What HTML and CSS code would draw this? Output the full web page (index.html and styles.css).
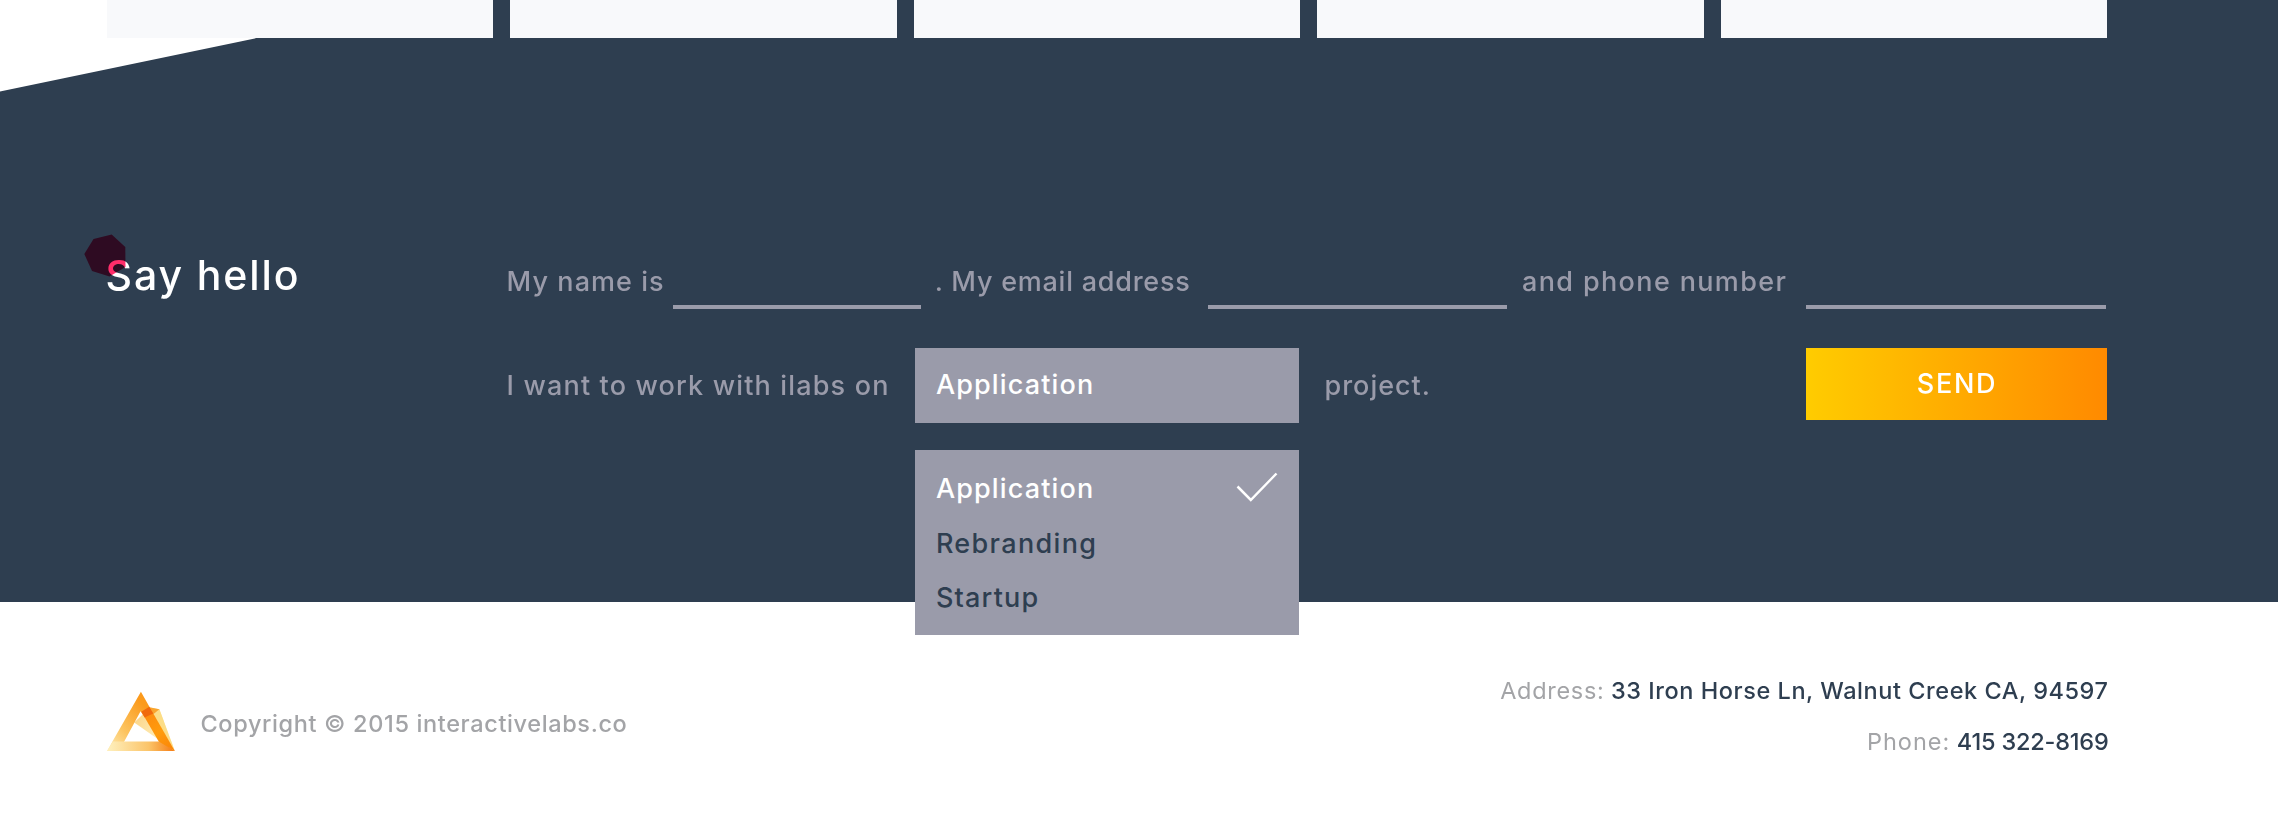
FILE: index.html
```html
<!DOCTYPE html>
<html lang="en">
<head>
<meta charset="utf-8">
<title>Interactive Labs</title>
<link rel="stylesheet" href="styles.css">
</head>
<body>
<section class="dark">
  <div class="wedge"></div>
  <div class="cards">
    <div class="card"></div>
    <div class="card"></div>
    <div class="card"></div>
    <div class="card"></div>
    <div class="card"></div>
  </div>
  <div class="contact">
    <h2 class="title">Say hello
      <svg class="heptagon" viewBox="0 0 42 43"><path d="M27.700 0.500L9.500 5L0.300 20L8 37L25.500 42.500L41.500 33L41.300 13Z" fill="#ff2d6a"/></svg>
    </h2>
    <form class="form">
      <div class="row row-fields">
        <span class="label l-name">My name is</span>
        <span class="field f-name"></span>
        <span class="label l-email">. My email address</span>
        <span class="field f-email"></span>
        <span class="label l-phone">and phone number</span>
        <span class="field f-phone"></span>
      </div>
      <div class="row row-project">
        <span class="label l-want">I want to work with ilabs on</span>
        <div class="select">
          <span class="value">Application</span>
          <ul class="menu">
            <li class="item active">Application
              <svg class="check" viewBox="0 0 42 30"><path d="M1.500 14.500L14.800 28L40.500 1.500" fill="none" stroke="#fff" stroke-width="2.500"/></svg>
            </li>
            <li class="item rebranding">Rebranding</li>
            <li class="item startup">Startup</li>
          </ul>
        </div>
        <span class="label l-project">project.</span>
        <button class="send" type="button">SEND</button>
      </div>
    </form>
  </div>
</section>
<footer class="footer">
  <svg class="logo" viewBox="22 18 204 181">
    <defs>
      <linearGradient id="ring" gradientUnits="userSpaceOnUse" x1="22" y1="197" x2="150" y2="80">
        <stop offset="0" stop-color="#fff0bd"/><stop offset=".45" stop-color="#fcc460"/><stop offset="1" stop-color="#fb9a1c"/>
      </linearGradient>
      <linearGradient id="base" gradientUnits="userSpaceOnUse" x1="30" y1="0" x2="224" y2="0">
        <stop offset="0" stop-color="#feeeba"/><stop offset=".6" stop-color="#fbc469"/><stop offset="1" stop-color="#f57a12"/>
      </linearGradient>
      <linearGradient id="leg" gradientUnits="userSpaceOnUse" x1="140" y1="80" x2="224" y2="197">
        <stop offset="0" stop-color="#fc8a10"/><stop offset=".5" stop-color="#ff9c0c"/><stop offset="1" stop-color="#f98208"/>
      </linearGradient>
      <linearGradient id="face" gradientUnits="userSpaceOnUse" x1="105" y1="100" x2="185" y2="150">
        <stop offset="0" stop-color="#fbd58a"/><stop offset="1" stop-color="#fff0bb"/>
      </linearGradient>
    </defs>
    <path d="M103 112L150 67L178 72L224 197Z" fill="url(#face)"/>
    <path d="M178 72L224 197L160 90Z" fill="#fcdd86"/>
    <path d="M123 20L22 197H58L122 78L134 96L158 82Z" fill="url(#ring)"/>
    <path d="M22 197L40 168H184L224 197Z" fill="url(#base)"/>
    <path d="M134 96L156 78L224 197L176 168Z" fill="url(#leg)"/>
    <path d="M148 66L178 72L160 87Z" fill="#f9a52d"/>
    <path d="M124 80L148 65L160 85L134 97Z" fill="#f0690c"/>
  </svg>
  <p class="copyright">Copyright © 2015 interactivelabs.co</p>
  <dl class="details">
    <div class="detail"><dt class="address-label">Address:</dt><dd class="address">33 Iron Horse Ln, Walnut Creek CA, 94597</dd></div>
    <div class="detail"><dt class="phone-label">Phone:</dt><dd class="phone">415 322-8169</dd></div>
  </dl>
</footer>
</body>
</html>
```
FILE: styles.css
```css
* { box-sizing: border-box; }
body {
  margin: 0;
  background: #fff;
  font-family: Inter, Lato, sans-serif;
  font-weight: 500;
}
.dark {
  position: relative;
  height: 601.5px;
  background: #2e3e50;
  padding: 0 171px 0 107px;
}
.wedge {
  position: absolute;
  left: 0;
  top: 0;
  width: 439px;
  height: 91.6px;
  background: #fff;
  clip-path: polygon(0 0, 100% 0, 0 100%);
}
.cards {
  position: relative;
  display: grid;
  grid-template-columns: repeat(5, 1fr);
  gap: 17.2px;
  height: 38.4px;
}
.card { background: #f8f9fb; }
.contact {
  display: flex;
  padding-top: 212.7px;
}
.title {
  position: relative;
  margin: 0 0 0 -1.5px;
  width: 399.1px;
  font-size: 41px;
  font-weight: 500;
  line-height: 48px;
  letter-spacing: 1.9px;
  color: #fff;
}
.heptagon {
  position: absolute;
  left: -21.5px;
  top: -17px;
  width: 42px;
  height: 43px;
  mix-blend-mode: multiply;
}
.form {
  flex: 1;
  margin: 10.9px 0 0 2px;
}
.row {
  display: flex;
  align-items: flex-start;
  font-size: 27px;
  line-height: 30px;
  color: #9a9baa;
  white-space: nowrap;
}
.row-fields { height: 47px; }
.row-project { margin-top: 39px; }
.label { flex: none; padding-top: 5px; }
.l-name { width: 166.3px; letter-spacing: 1.06px; }
.l-email { width: 287.2px; padding-left: 14px; letter-spacing: 0.76px; }
.l-phone { width: 298.9px; padding-left: 15px; letter-spacing: 1.36px; }
.l-want { width: 408.8px; padding-top: 23px; letter-spacing: 1.16px; }
.l-project { padding: 23px 0 0 26px; letter-spacing: 0.96px; }
.field {
  flex: none;
  height: 47px;
  border-bottom: 4px solid #9a9baa;
}
.f-name { width: 247.8px; }
.f-email { width: 299.2px; }
.f-phone { width: 299.7px; }
.select {
  position: relative;
  flex: none;
  width: 383.2px;
  height: 75px;
  padding: 22px 20.5px;
  background: #9a9baa;
  color: #fff;
  letter-spacing: 1.15px;
}
.menu {
  position: absolute;
  z-index: 2;
  left: 0;
  top: 102.3px;
  width: 100%;
  height: 184.5px;
  margin: 0;
  padding: 11.8px 20.5px 0;
  list-style: none;
  background: #9a9baa;
}
.item {
  display: flex;
  justify-content: space-between;
  height: 54.7px;
  line-height: 54.7px;
  color: #2e3e50;
}
.active { color: #fff; }
.rebranding { letter-spacing: 1.35px; }
.startup { letter-spacing: 1.2px; }
.check {
  width: 42px;
  height: 30px;
  margin: 10px 0 0;
}
.send {
  width: 301px;
  height: 72px;
  margin-left: auto;
  padding: 1px 0 0 1px;
  border: 0;
  background: linear-gradient(90deg, #ffcc00, #ff8a00);
  font: inherit;
  line-height: 30px;
  letter-spacing: 1.7px;
  color: #fff;
}
.footer {
  display: flex;
  align-items: flex-start;
  padding: 63.5px 169.5px 0 107px;
  font-size: 23.5px;
  color: #a3a4a7;
  white-space: nowrap;
}
.logo {
  width: 68.5px;
  height: 60.8px;
  margin-top: 26px;
}
.copyright {
  margin: 45.3px 0 0 25px;
  line-height: 28px;
  letter-spacing: 0.63px;
}
.details {
  margin: 0 0 0 auto;
  line-height: 51px;
}
.detail {
  display: flex;
  justify-content: flex-end;
}
dd { margin: 0 0 0 6.5px; color: #2e3e50; }
.address-label { letter-spacing: 0.7px; font-weight: 400; }
.address { letter-spacing: 0.55px; }
.phone-label { letter-spacing: 1px; font-weight: 400; }
.phone { letter-spacing: -0.2px; }
```
